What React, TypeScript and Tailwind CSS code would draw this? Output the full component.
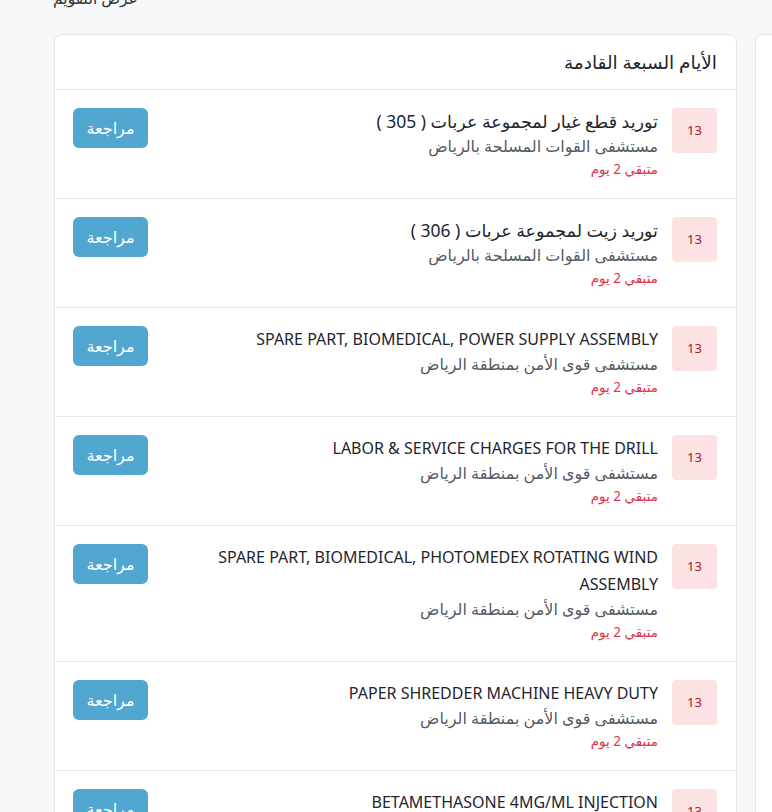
import React from 'react';

type Item = {
  title: string;
  place: string;
};

const items: Item[] = [
  { title: 'توريد قطع غيار لمجموعة عربات ( 305 )', place: 'مستشفى القوات المسلحة بالرياض' },
  { title: 'توريد زيت لمجموعة عربات ( 306 )', place: 'مستشفى القوات المسلحة بالرياض' },
  { title: 'SPARE PART, BIOMEDICAL, POWER SUPPLY ASSEMBLY', place: 'مستشفى قوى الأمن بمنطقة الرياض' },
  { title: 'LABOR & SERVICE CHARGES FOR THE DRILL', place: 'مستشفى قوى الأمن بمنطقة الرياض' },
  { title: 'SPARE PART, BIOMEDICAL, PHOTOMEDEX ROTATING WIND ASSEMBLY', place: 'مستشفى قوى الأمن بمنطقة الرياض' },
  { title: 'PAPER SHREDDER MACHINE HEAVY DUTY', place: 'مستشفى قوى الأمن بمنطقة الرياض' },
  { title: 'BETAMETHASONE 4MG/ML INJECTION', place: 'مستشفى قوى الأمن بمنطقة الرياض' },
];

const isArabic = (s: string) => /[\u0600-\u06FF]/.test(s);

const Row: React.FC<{ item: Item }> = ({ item }) => (
  <div className="flex items-start gap-[14px] border-t border-[#e5e7eb] pt-[18px] pb-[18px] pl-[18px] pr-[19px]">
    {/* day badge */}
    <div className="flex h-[45px] w-[45px] shrink-0 items-center justify-center rounded-[4px] bg-[#fde2e3] text-[13px] text-[#a0202c]">
      13
    </div>
    <div className="min-w-0 flex-1">
      <div
        className={
          isArabic(item.title)
            ? 'text-[17.5px] leading-[27px] text-[#1f252d]'
            : 'text-[16px] leading-[27px] text-[#1f252d]'
        }
      >
        {item.title}
      </div>
      <div className="mt-[-1px] text-[16px] leading-[24px] text-[#555b63]">{item.place}</div>
      <div className="text-[13.5px] leading-[22px] text-[#e0354a]">متبقي 2 يوم</div>
    </div>
    <button className="h-[40px] w-[75px] shrink-0 rounded-[6px] bg-[#52a7d0] text-[16px] text-white">
      مراجعة
    </button>
  </div>
);

export default function App() {
  return (
    <div
      className="h-[812px] w-[772px] overflow-hidden bg-[#f7f8fa]"
      style={{ fontFamily: '"Noto Sans", "DejaVu Sans", sans-serif' }}
    >
      <div className="ml-[53px] mt-[-14px] h-[21px]">
        <span dir="rtl" className="text-[15.5px] leading-[21px] text-[#333]">
          عرض التقويم
        </span>
      </div>
      <div className="mt-[27px] flex">
        <div dir="rtl" className="ml-[54px] w-[683px] shrink-0 overflow-hidden rounded-[8px] border border-[#e5e7eb] bg-white">
          <div className="flex h-[54px] items-center px-[19px] text-[18.5px] text-[#1f252d]">
            الأيام السبعة القادمة
          </div>
          {items.map((it, i) => (
            <Row key={i} item={it} />
          ))}
        </div>
        <div className="ml-[18px] h-[900px] w-[300px] shrink-0 rounded-[8px] border border-[#e5e7eb] bg-white" />
      </div>
    </div>
  );
}
